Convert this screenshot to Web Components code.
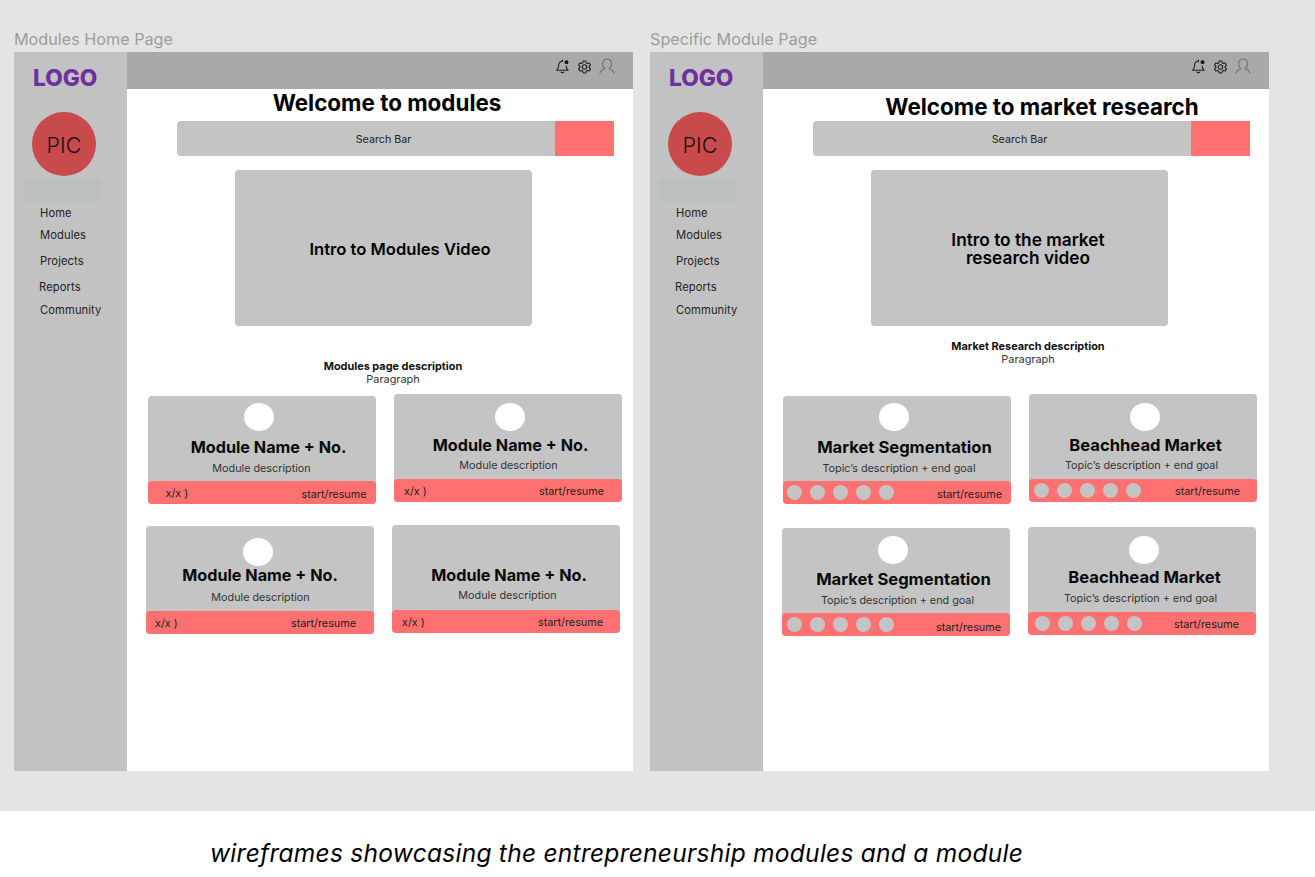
<!DOCTYPE html>
<html lang="en">
<head>
<meta charset="utf-8">
<title>Wireframes</title>
<style>
    html, body { margin: 0; padding: 0; background: #fff; font-family: "Inter", "Liberation Sans", sans-serif; }
</style>
</head>
<body>

<wire-canvas>
    <wire-frame label="Modules Home Page" style="--title-top: 0px; --title-bottom: 4px; --title-x: 14px; --intro-x: 33px; --intro-size: 16.600px; --desc-x: 19px; --desc-top: 34px; --row-h: 131px; --name-size: 16.200px">
        <span slot="title">Welcome to modules</span>
        <span slot="video">Intro to Modules Video</span>
        <span slot="desc-title">Modules page description</span>
        <module-card name="Module Name + No." desc="Module description" count="x/x )" style="--ml: 1.500px; --mt: 2px; --pic-top: 7px; --pic-x: 96px; --name-x: 7px; --text-y: 6px; --count-x: 18px; --start-r: 9px; --start-y: 4px"></module-card>
        <module-card name="Module Name + No." desc="Module description" count="x/x )" style="--ml: 2px; --pic-top: 9px; --pic-x: 101px; --name-x: 2.500px; --text-x: 0.500px; --count-x: 10px; --start-r: 18px"></module-card>
        <module-card name="Module Name + No." desc="Module description" count="x/x )" style="--mt: 1px; --pic-top: 12px; --name-top: -2px; --text-x: 0.500px; --count-x: 9px; --start-r: 18px"></module-card>
        <module-card name="Module Name + No." desc="Module description" count="x/x )" no-pic style="--name-top: -1px; --name-x: 3px; --text-x: 1.500px; --text-y: 4px; --count-x: 10px; --start-r: 17px"></module-card>
    </wire-frame>
    <wire-frame label="Specific Module Page" style="--title-top: 4px; --title-bottom: 0px; --title-x: 52px; --intro-x: 17px; --intro-size: 17.300px; --desc-x: 17px; --desc-top: 14px; --row-h: 133px; --name-size: 16.600px">
        <span slot="title">Welcome to market research</span>
        <span slot="video">Intro to the market<br>research video</span>
        <span slot="desc-title">Market Research description</span>
        <module-card name="Market Segmentation" desc="Topic’s description + end goal" dots="5" style="--ml: 1px; --mt: 2px; --pic-top: 7px; --pic-x: 96px; --name-x: 7.500px; --text-x: 2px; --text-y: 6px; --dots-x: 4px; --start-r: 9px; --start-y: 4px"></module-card>
        <module-card name="Beachhead Market" desc="Topic’s description + end goal" dots="5" style="--ml: 1px; --pic-top: 9px; --pic-x: 101px; --name-x: 2.500px; --text-x: -1.500px; --dots-x: 5px; --start-r: 17px"></module-card>
        <module-card name="Market Segmentation" desc="Topic’s description + end goal" dots="5" style="--mt: 1px; --pic-x: 96px; --name-x: 7.500px; --text-x: 1.500px; --text-y: 6px; --dots-x: 5px; --start-r: 9px; --start-y: 6px"></module-card>
        <module-card name="Beachhead Market" desc="Topic’s description + end goal" dots="5" style="--pic-top: 9px; --pic-x: 101px; --name-top: -1px; --name-x: 2.500px; --text-x: -1.500px; --dots-x: 7px; --start-r: 17px"></module-card>
    </wire-frame>
</wire-canvas>
<wire-caption>wireframes showcasing the entrepreneurship modules and a module</wire-caption>

<template id="wire-canvas-template">
    <style>
        :host {
            display: flex;
            gap: 17px;
            box-sizing: border-box;
            height: 811px;
            padding: 30px 0 0 14px;
            background: #e4e4e4;
        }
    </style>
    <slot></slot>
</template>

<template id="wire-frame-template">
    <style>
        :host {
            display: flex;
            flex-direction: column;
            width: 619px;
        }

        .label {
            height: 22px;
            line-height: 19px;
            font-size: 16.200px;
            color: #9c9c9c;
        }

        .frame {
            display: flex;
            height: 719px;
            background: #fff;
        }

        .main {
            flex: 1;
            min-width: 0;
            display: flex;
            flex-direction: column;
        }

        h1 {
            margin: 0;
            box-sizing: border-box;
            height: 32px;
            padding: var(--title-top) 0 var(--title-bottom) var(--title-x);
            display: flex;
            align-items: center;
            justify-content: center;
            font-size: 22.400px;
            line-height: 28px;
            font-weight: 700;
            color: #000;
        }

        wire-search {
            margin-left: 50px;
        }

        .video {
            box-sizing: border-box;
            width: 297px;
            height: 156px;
            margin: 14px 0 0 108px;
            padding: 2px 0 0 var(--intro-x);
            display: flex;
            align-items: center;
            justify-content: center;
            text-align: center;
            border-radius: 4px;
            background: #c4c4c4;
            font-size: var(--intro-size);
            line-height: 18.500px;
            font-weight: 600;
            color: #000;
        }

        .desc {
            box-sizing: border-box;
            width: 297px;
            height: 68px;
            margin-left: 108px;
            padding: var(--desc-top) 0 0 var(--desc-x);
            text-align: center;
            font-size: 10.900px;
            line-height: 13px;
            color: #333;
        }

        .desc b {
            display: block;
            font-weight: 700;
            color: #111;
        }

        .cards {
            display: grid;
            grid-template-columns: 228px 228px;
            grid-auto-rows: var(--row-h);
            column-gap: 18px;
            align-items: start;
            margin-left: 19px;
        }
    </style>
    <div class="label"></div>
    <div class="frame">
        <wire-sidebar></wire-sidebar>
        <div class="main">
            <wire-topbar></wire-topbar>
            <h1><slot name="title"></slot></h1>
            <wire-search></wire-search>
            <div class="video"><div><slot name="video"></slot></div></div>
            <div class="desc">
                <b><slot name="desc-title"></slot></b>
                Paragraph
            </div>
            <div class="cards"><slot></slot></div>
        </div>
    </div>
</template>

<template id="wire-sidebar-template">
    <style>
        :host {
            display: flex;
            flex-direction: column;
            box-sizing: border-box;
            flex: 0 0 113px;
            background: #c2c2c2;
            padding-top: 14px;
        }

        .logo {
            height: 24px;
            line-height: 24px;
            padding-left: 19px;
            font-size: 22.700px;
            font-weight: 800;
            color: #6f2f9e;
        }

        .pic {
            box-sizing: border-box;
            width: 64px;
            height: 64px;
            margin: 22px 0 0 18px;
            padding-top: 2px;
            display: flex;
            align-items: center;
            justify-content: center;
            border-radius: 50%;
            background: #c94a4a;
            font-size: 21.500px;
            font-weight: 300;
            color: #111;
        }

        .active {
            width: 78px;
            height: 22px;
            margin: 4px 0 0 9px;
            background: #bcc0bd;
        }

        nav {
            display: flex;
            flex-direction: column;
            padding: 4px 0 0 26px;
            font-size: 11.200px;
            letter-spacing: 0.100px;
            line-height: 14px;
            color: #222;
        }

        nav span:nth-child(2) { margin-top: 8px; }
        nav span:nth-child(3) { margin-top: 12px; }
        nav span:nth-child(4) { margin-top: 12px; margin-left: -1px; }
        nav span:nth-child(5) { margin-top: 9px; }
    </style>
    <div class="logo">LOGO</div>
    <div class="pic">PIC</div>
    <div class="active"></div>
    <nav>
        <span>Home</span>
        <span>Modules</span>
        <span>Projects</span>
        <span>Reports</span>
        <span>Community</span>
    </nav>
</template>

<template id="wire-topbar-template">
    <style>
        :host {
            display: flex;
            align-items: center;
            justify-content: flex-end;
            gap: 8px;
            box-sizing: border-box;
            height: 37px;
            padding: 0 18px 8px 0;
            background: #a9a9a9;
        }

        svg {
            display: block;
            fill: none;
            stroke: #1f1f1f;
            stroke-width: 1.100;
            stroke-linecap: round;
            stroke-linejoin: round;
        }

        .user {
            stroke: #6f6f6f;
            margin-top: -2px;
        }
    </style>
    <svg width="15" height="15" viewBox="0 0 15 15">
        <path d="M7.500 2.200C5 2.200 3.600 4 3.600 6.300c0 2.600-.7 3.800-2 5h11.600c-1.300-1.200-1.900-2.300-2-4.300"/>
        <path d="M6 13c.4.8 2.400.8 2.900 0"/>
        <path d="M7.500 1v1.200"/>
        <circle cx="11.500" cy="3.200" r="1.900" fill="#111" stroke="none"/>
    </svg>
    <svg width="13" height="14" viewBox="0 0 13 14">
        <path d="M5.200 1h2.600l.4 1.800 1.200.7 1.800-.6 1.300 2.300-1.400 1.300v1l1.400 1.300-1.300 2.300-1.800-.6-1.200.7-.4 1.800H5.200l-.4-1.800-1.200-.7-1.800.6L.500 8.800l1.400-1.300v-1L.500 5.200l1.300-2.300 1.800.6 1.200-.7z"/>
        <circle cx="6.500" cy="7" r="2.200"/>
    </svg>
    <svg class="user" width="16" height="16" viewBox="0 0 16 16">
        <path d="M1 15c.6-2.700 2.500-3.500 4.800-4.300-1.500-1-2.300-2.700-2.300-4.900C3.500 3 5.300 1 8 1s4.500 2 4.500 4.800c0 2.200-.8 3.900-2.300 4.900 2.300.8 4.200 1.600 4.800 4.300"/>
    </svg>
</template>

<template id="wire-search-template">
    <style>
        :host {
            display: flex;
            width: 437px;
            height: 35px;
            font-size: 10.700px;
            color: #222;
        }

        .field {
            flex: 1;
            display: flex;
            align-items: center;
            justify-content: center;
            padding: 1px 0 0 35px;
            border-radius: 4px 0 0 4px;
            background: #c4c4c4;
        }

        .go {
            flex: 0 0 59px;
            background: #ff7070;
        }
    </style>
    <div class="field">Search Bar</div>
    <div class="go"></div>
</template>

<template id="module-card-template">
    <style>
        :host {
            display: flex;
            flex-direction: column;
            box-sizing: border-box;
            width: 228px;
            height: 108px;
            margin: var(--mt, 0) 0 0 var(--ml, 0);
            border-radius: 4px;
            background: #c4c4c4;
            text-align: center;
        }

        :host > * {
            flex-shrink: 0;
        }

        .pic {
            width: 30px;
            height: 28px;
            margin: var(--pic-top, 8px) 0 0 var(--pic-x, 97px);
            border-radius: 50%;
            background: #fff;
        }

        :host([no-pic]) .pic {
            background: none;
        }

        .name {
            margin-top: calc(14px - var(--pic-top, 8px) + var(--name-top, 0px));
            margin-left: calc(var(--name-x, 0px) * 2);
            height: 18px;
            line-height: 18px;
            font-size: var(--name-size, 16.200px);
            font-weight: 700;
            color: #0a0a0a;
            white-space: nowrap;
        }

        .text {
            margin-top: calc(var(--text-y, 5px) - var(--name-top, 0px));
            margin-left: calc(var(--text-x, 0px) * 2);
            line-height: 14px;
            font-size: 10.800px;
            color: #333;
            white-space: nowrap;
        }

        .foot {
            margin-top: auto;
            box-sizing: border-box;
            height: 23px;
            display: flex;
            align-items: center;
            justify-content: space-between;
            padding: 0 var(--start-r, 10px) 0 var(--count-x, 0);
            border-radius: 4px;
            background: #ff7070;
            font-size: 10.800px;
            color: #222;
        }

        .count {
            margin-top: 1px;
        }

        .start {
            margin-top: var(--start-y, 2px);
        }

        .dots {
            display: flex;
            gap: 8px;
            margin-top: 0;
            margin-left: var(--dots-x, 0);
        }

        .dots i {
            width: 15px;
            height: 15px;
            border-radius: 50%;
            background: #c4c4c4;
        }
    </style>
    <div class="pic"></div>
    <div class="name"></div>
    <div class="text"></div>
    <div class="foot">
        <span class="count"></span>
        <span class="start">start/resume</span>
    </div>
</template>

<template id="wire-caption-template">
    <style>
        :host {
            display: block;
            padding: 27px 0 0 210px;
            font-size: 24.500px;
            letter-spacing: 0.270px;
            line-height: 30px;
            font-style: italic;
            color: #000;
            white-space: nowrap;
        }
    </style>
    <slot></slot>
</template>

<script type="module">
    const from_template = (id) => class extends HTMLElement {
        constructor() {
            super();
            const template_clone = document.getElementById(id).content.cloneNode(true);
            this.attachShadow({ mode: "open" }).append(template_clone);
        }
    };

    customElements.define("wire-canvas", from_template("wire-canvas-template"));
    customElements.define("wire-sidebar", from_template("wire-sidebar-template"));
    customElements.define("wire-topbar", from_template("wire-topbar-template"));
    customElements.define("wire-search", from_template("wire-search-template"));
    customElements.define("wire-caption", from_template("wire-caption-template"));

    customElements.define(
        "wire-frame",
        class extends from_template("wire-frame-template") {
            connectedCallback() {
                this.shadowRoot.querySelector(".label").textContent = this.getAttribute("label");
            }
        },
    );

    customElements.define(
        "module-card",
        class extends from_template("module-card-template") {
            connectedCallback() {
                const root = this.shadowRoot;
                root.querySelector(".name").textContent = this.getAttribute("name");
                root.querySelector(".text").textContent = this.getAttribute("desc");

                const left = root.querySelector(".count");
                const dots = Number(this.getAttribute("dots") || 0);
                if (dots) {
                    left.className = "dots";
                    left.replaceChildren(...Array.from({ length: dots }, () => document.createElement("i")));
                } else {
                    left.textContent = this.getAttribute("count");
                }
            }
        },
    );
</script>
</body>
</html>
